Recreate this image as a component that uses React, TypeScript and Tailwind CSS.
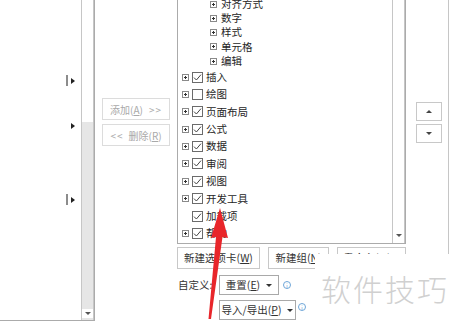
import React from "react";

const FONT = { fontFamily: '"Noto Sans CJK SC", "Noto Sans", sans-serif' };

function PlusBox() {
  return (
    <div className="w-[7px] h-[7px] border border-[#8a8a8a] bg-white relative shrink-0">
      <div className="absolute left-[1px] right-[1px] top-[2px] h-px bg-[#333]" />
      <div className="absolute top-[1px] bottom-[1px] left-[2px] w-px bg-[#333]" />
    </div>
  );
}

function Check({ checked }: { checked: boolean }) {
  return (
    <div className="w-[11px] h-[11px] border border-[#6b6b6b] bg-white shrink-0 flex items-center justify-center">
      {checked && (
        <svg width="9" height="9" viewBox="0 0 9 9">
          <path d="M1 4.6 L3.4 7 L8 1.6" fill="none" stroke="#444" strokeWidth="1" />
        </svg>
      )}
    </div>
  );
}

function U({ c }: { c: string }) {
  return <span className="underline underline-offset-[1px]">{c}</span>;
}

const subItems = ["对齐方式", "数字", "样式", "单元格", "编辑"];
const topItems: { t: string; c: boolean; p: boolean }[] = [
  { t: "插入", c: true, p: true },
  { t: "绘图", c: false, p: true },
  { t: "页面布局", c: true, p: true },
  { t: "公式", c: true, p: true },
  { t: "数据", c: true, p: true },
  { t: "审阅", c: true, p: true },
  { t: "视图", c: true, p: true },
  { t: "开发工具", c: true, p: true },
  { t: "加载项", c: true, p: false },
  { t: "帮助", c: true, p: true },
];

function Marker({ bar }: { bar: boolean }) {
  return (
    <div className="flex items-center gap-[3px] h-[11px]">
      <div className={`w-[2px] h-[11px] ${bar ? "bg-[#8c8c8c]" : "bg-transparent"}`} />
      <div className="w-0 h-0 border-y-[3px] border-y-transparent border-l-[4px] border-l-[#222]" />
    </div>
  );
}

function InfoIcon() {
  return (
    <div className="w-[8px] h-[8px] rounded-full border border-[#6fa6d8] flex items-center justify-center text-[5px] leading-none text-[#5a95cf]">
      i
    </div>
  );
}

export default function App() {
  return (
    <div className="w-[450px] h-[322px] bg-white relative overflow-hidden flex text-[#262626]" style={FONT}>
      {/* Left list */}
      <div className="w-[95px] h-[321px] border-r border-b border-[#ababab] flex shrink-0">
        <div className="flex-1 flex flex-col items-end pr-[6px] pt-[75px]">
          <Marker bar />
          <div className="mt-[34px]">
            <Marker bar={false} />
          </div>
          <div className="mt-[63px]">
            <Marker bar />
          </div>
        </div>
        <div className="w-[13px] flex flex-col border-x border-[#c6c6c6]">
          <div className="h-[122px] bg-white" />
          <div className="flex-1 bg-[#e6e6e6] flex flex-col justify-end pb-[2px] items-center">
            <div className="w-[11px] h-[9px] bg-white flex items-center justify-center">
              <div className="w-0 h-0 border-x-[3px] border-x-transparent border-t-[3px] border-t-[#555]" />
            </div>
          </div>
        </div>
      </div>

      {/* Add / Remove buttons */}
      <div className="w-[82px] shrink-0 flex flex-col items-center pt-[98px] gap-[4px] text-[10px] text-[#a9a9a9]">
        <div className="w-[68px] h-[22px] border border-[#dcdcdc] flex items-center justify-center gap-[6px]">
          <span>
            添加(<U c="A" />)
          </span>
          <span className="tracking-[1px]">&gt;&gt;</span>
        </div>
        <div className="w-[68px] h-[22px] border border-[#dcdcdc] flex items-center justify-center gap-[5px]">
          <span className="tracking-[1px]">&lt;&lt;</span>
          <span>
            删除(<U c="R" />)
          </span>
        </div>
      </div>

      {/* Middle panel */}
      <div className="w-[229px] shrink-0 flex flex-col">
        <div className="h-[244px] border-l border-b border-r border-[#ababab] flex">
          <div className="flex-1 overflow-hidden">
            <div className="mt-[-3.15px] text-[10.5px] leading-none">
              {subItems.map((s) => (
                <div key={s} className="h-[14.3px] flex items-center pl-[32px] gap-[4px]">
                  <PlusBox />
                  <span>{s}</span>
                </div>
              ))}
              {topItems.map((it) => (
                <div key={it.t} className="h-[17.4px] flex items-center pl-[4px]">
                  <div className="w-[7px] mr-[3px]">{it.p && <PlusBox />}</div>
                  <Check checked={it.c} />
                  <span className="ml-[3px]">{it.t}</span>
                </div>
              ))}
            </div>
          </div>
          <div className="w-[13px] flex flex-col justify-end items-center border-x border-[#c6c6c6] pb-[3px]">
            <div className="w-[11px] h-[9px] flex items-center justify-center">
              <div className="w-0 h-0 border-x-[3px] border-x-transparent border-t-[3px] border-t-[#555]" />
            </div>
          </div>
        </div>

        <div className="flex gap-[8px] mt-[3px] text-[10.5px] text-[#333]">
          <div className="w-[83px] h-[22px] border border-[#c8c8c8] flex items-center justify-center">
            新建选项卡(<U c="W" />)
          </div>
          <div className="w-[61px] h-[22px] border border-[#c8c8c8] flex items-center justify-center">
            新建组(<U c="N" />)
          </div>
          <div className="w-[69px] h-[22px] border border-[#c8c8c8] flex items-center justify-center">
            重命名(<U c="M" />)...
          </div>
        </div>

        <div className="flex items-center mt-[6px] text-[10.5px] text-[#333]">
          <span className="w-[42px] pl-[1px]">自定义:</span>
          <div className="w-[60px] h-[20px] border border-[#a9a9a9] flex items-center justify-center gap-[6px]">
            <span>
              重置(<U c="E" />)
            </span>
            <div className="w-0 h-0 border-x-[3px] border-x-transparent border-t-[3px] border-t-[#333]" />
          </div>
          <div className="ml-[4px]">
            <InfoIcon />
          </div>
        </div>
        <div className="flex items-center mt-[5px] pl-[42px] text-[10.5px] text-[#333]">
          <div className="w-[77px] h-[20px] border border-[#a9a9a9] flex items-center justify-center gap-[6px]">
            <span>
              导入/导出(<U c="P" />)
            </span>
            <div className="w-0 h-0 border-x-[3px] border-x-transparent border-t-[3px] border-t-[#333]" />
          </div>
          <div className="ml-[2px] mt-[-6px]">
            <InfoIcon />
          </div>
        </div>
      </div>

      {/* Right column */}
      <div className="w-[43px] shrink-0 h-full border-r border-[#c6c6c6] flex flex-col items-center pt-[102px] gap-[3px] pl-[3px]">
        <div className="w-[26px] h-[19px] border border-[#c8c8c8] flex items-center justify-center">
          <div className="w-0 h-0 border-x-[3px] border-x-transparent border-b-[3px] border-b-[#444]" />
        </div>
        <div className="w-[26px] h-[19px] border border-[#c8c8c8] flex items-center justify-center">
          <div className="w-0 h-0 border-x-[3px] border-x-transparent border-t-[3px] border-t-[#444]" />
        </div>
      </div>

      {/* Watermark */}
      <div className="absolute left-[315px] top-[254px] w-[135px] h-[68px] bg-white flex items-center pl-[6px]">
        <span className="text-[30px] leading-none tracking-[2px] text-[#d0d0d0] font-light">软件技巧</span>
      </div>

      {/* Red arrow */}
      <svg className="absolute left-0 top-0 pointer-events-none" width="450" height="322">
        <polygon
          points="220,208 211,238 216,237 208.5,319 211,319 222.5,237 228,238"
          fill="#e8262b"
        />
      </svg>
    </div>
  );
}
